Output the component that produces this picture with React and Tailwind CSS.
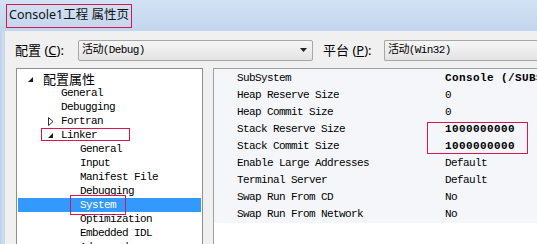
import React from 'react';

const mono = "font-['Liberation_Mono','Noto_Sans_CJK_SC',monospace] text-[11px] tracking-[-0.6px]";
const cjk = "font-['Noto_Sans','Noto_Sans_CJK_SC',sans-serif]";

const Expanded = () => (
  <svg width="7" height="7" viewBox="0 0 7 7" className="shrink-0">
    <path d="M6 1 L6 6 L1 6 Z" fill="#1a1a1a" />
  </svg>
);

const Collapsed = () => (
  <svg width="7" height="9" viewBox="0 0 7 9" className="shrink-0">
    <path d="M1.5 0.5 L6 4.5 L1.5 8.5 Z" fill="white" stroke="#333" strokeWidth="1" />
  </svg>
);

const treeItems = [
  { label: '配置属性', level: 0, icon: 'open', cjk: true },
  { label: 'General', level: 1 },
  { label: 'Debugging', level: 1 },
  { label: 'Fortran', level: 1, icon: 'closed' },
  { label: 'Linker', level: 1, icon: 'open', box: 'linker' },
  { label: 'General', level: 2 },
  { label: 'Input', level: 2 },
  { label: 'Manifest File', level: 2 },
  { label: 'Debugging', level: 2 },
  { label: 'System', level: 2, selected: true, box: 'system' },
  { label: 'Optimization', level: 2 },
  { label: 'Embedded IDL', level: 2 },
  { label: 'Advanced', level: 2 },
];

const props = [
  ['SubSystem', 'Console (/SUBSYSTEM:CONSOLE)', true],
  ['Heap Reserve Size', '0'],
  ['Heap Commit Size', '0'],
  ['Stack Reserve Size', '1000000000', true],
  ['Stack Commit Size', '1000000000', true],
  ['Enable Large Addresses', 'Default'],
  ['Terminal Server', 'Default'],
  ['Swap Run From CD', 'No'],
  ['Swap Run From Network', 'No'],
];

const Combo = ({ children, className }) => (
  <div className={`h-[21px] flex items-center border border-[#a7a7a7] rounded-[2px] bg-gradient-to-b from-[#f6f6f6] to-[#e3e3e3] ${className}`}>
    <span className={`pl-[3px] flex-1 whitespace-nowrap ${mono}`}>{children}</span>
  </div>
);

export default function App() {
  return (
    <div className="w-[537px] h-[244px] overflow-hidden bg-[#f0f0f0] flex flex-col text-black">
      <div className="h-[31px] shrink-0 bg-gradient-to-b from-[#d3e2f4] to-[#c2d6ee] flex items-center pl-[6px]">
        <span className={`border border-[#d8184a] h-[24px] px-[2px] flex items-center text-[12.5px] text-[#111] ${cjk}`}>
          Console1工程 属性页
        </span>
      </div>

      <div className="flex flex-1 min-h-0">
        <div className="w-[5px] bg-gradient-to-r from-[#bcd1ec] to-[#d4e2f3] border-r border-[#c9d5e3]" />

        <div className="flex-1 flex flex-col min-w-0">
          <div className="h-[37px] shrink-0 flex items-center pt-[2px]">
            <span className={`ml-[10px] w-[63px] text-[13px] ${cjk}`}>
              配置 (<span className="underline">C</span>):
            </span>
            <Combo className="w-[235px] pr-[5px]">
              活动(Debug)
              <span className="float-right mt-[6px]">
                <svg width="7" height="4" viewBox="0 0 7 4"><path d="M0 0 L7 0 L3.5 4 Z" fill="#222" /></svg>
              </span>
            </Combo>
            <span className={`ml-[10px] w-[61px] text-[13px] ${cjk}`}>
              平台 (<span className="underline">P</span>):
            </span>
            <Combo className="flex-1 border-r-0 rounded-r-none">活动(Win32)</Combo>
          </div>

          <div className="flex flex-1 min-h-0 pl-[11px]">
            <div className="w-[187px] shrink-0 bg-white border-l border-t border-r border-[#8b8e93] pt-[3px] pl-[1px] pr-[1px] overflow-hidden">
              {treeItems.map((it, i) => (
                <div
                  key={i}
                  className={`relative h-[14px] flex items-center ${it.selected ? 'bg-[#3399ff] text-white' : ''}`}
                >
                  <div className={`flex items-center ${it.level === 0 ? 'pl-[9px]' : it.level === 1 ? 'pl-[29px]' : 'pl-[62px]'}`}>
                    {it.level === 1 && (
                      <span className="w-[14px] flex items-center">
                        {it.icon === 'open' && <Expanded />}
                        {it.icon === 'closed' && <Collapsed />}
                      </span>
                    )}
                    {it.level === 0 && (
                      <span className="w-[16px] flex items-center"><Expanded /></span>
                    )}
                    <span className={it.cjk ? `text-[13px] leading-[14px] ${cjk}` : `${mono} leading-[14px]`}>{it.label}</span>
                  </div>
                  {it.box === 'linker' && (
                    <div className="absolute left-[23px] top-0 w-[89px] h-[13px] border border-[#d8184a]" />
                  )}
                  {it.box === 'system' && (
                    <div className="absolute left-[52px] -top-[3px] w-[56px] h-[20px] border border-[#d8184a]" />
                  )}
                </div>
              ))}
            </div>

            <div className="w-[10px] shrink-0" />

            <div className="flex-1 min-w-0 border-l border-t border-[#a0a0a0] bg-white overflow-hidden">
              <div className="relative bg-[#f4f6fa] pt-[1px]">
                {props.map(([k, v, bold], i) => (
                  <div key={i} className="h-[17px] flex items-center whitespace-nowrap">
                    <span className={`pl-[23px] w-[231px] shrink-0 ${mono}`}>{k}</span>
                    <span className={`${mono} ${bold ? 'font-bold tracking-[0.4px]' : ''}`}>{v}</span>
                  </div>
                ))}
                <div className="absolute left-[213px] top-[53px] w-[101px] h-[32px] border border-[#d8184a]" />
              </div>
            </div>
          </div>
        </div>
      </div>
    </div>
  );
}
